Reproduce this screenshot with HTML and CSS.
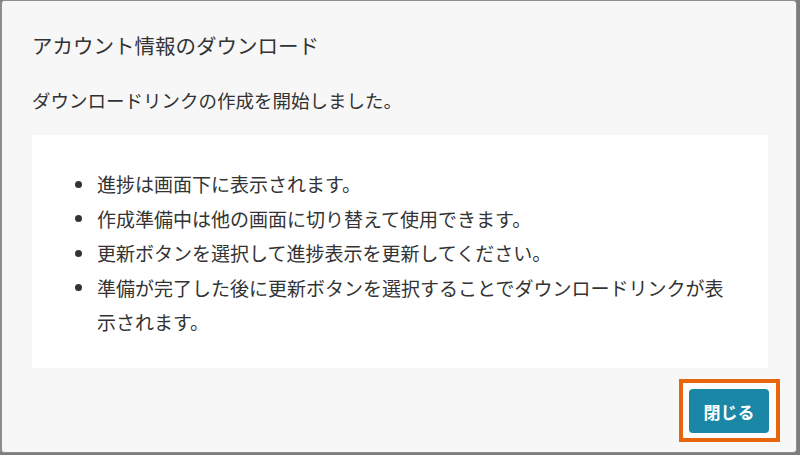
FILE: index.html
```html
<!DOCTYPE html>
<html lang="ja">
<head>
<meta charset="utf-8">
<title>アカウント情報のダウンロード</title>
<link rel="stylesheet" href="styles.css">
</head>
<body>
<div class="dialog">
  <h2 class="dialog-title">アカウント情報のダウンロード</h2>
  <p class="dialog-message">ダウンロードリンクの作成を開始しました。</p>
  <div class="notice">
    <ul class="notice-list">
      <li>進捗は画面下に表示されます。</li>
      <li>作成準備中は他の画面に切り替えて使用できます。</li>
      <li>更新ボタンを選択して進捗表示を更新してください。</li>
      <li>準備が完了した後に更新ボタンを選択することでダウンロードリンクが表示されます。</li>
    </ul>
  </div>
  <div class="dialog-footer">
    <div class="highlight">
      <button class="btn-close" type="button">閉じる</button>
    </div>
  </div>
</div>
</body>
</html>
```

FILE: styles.css
```css
* { box-sizing: border-box; }

html, body {
  margin: 0;
  padding: 0;
}

body {
  width: 800px;
  height: 455px;
  background: #7d7d7d;
  font-family: "Noto Sans CJK JP", "Noto Sans", sans-serif;
  color: #333333;
  overflow: hidden;
}

.dialog {
  width: 797px;
  display: flex;
  flex-direction: column;
  background: #f7f7f7;
  border: 1px solid #8e8e8e;
  border-left-width: 2px;
  border-radius: 4px;
  padding: 29px 28px 10px 30px;
}

.dialog-title {
  margin: 0;
  font-size: 20.5px;
  line-height: 30px;
  font-weight: normal;
  color: #333333;
}

.dialog-message {
  margin: 26px 0 0;
  font-size: 18.5px;
  line-height: 28px;
}

.notice {
  margin-top: 21px;
  background: #ffffff;
  border-radius: 3px;
  padding: 32px 40px 28px 43px;
}

.notice-list {
  margin: 0;
  padding: 0;
  list-style: none;
  font-size: 19px;
  line-height: 34.5px;
}

.notice-list li {
  display: flex;
}

.notice-list li::before {
  content: "";
  flex: none;
  width: 7px;
  height: 7px;
  border-radius: 50%;
  background: #333333;
  margin: 13.5px 15px 0 0;
}

.dialog-footer {
  display: flex;
  justify-content: flex-end;
  margin-top: 11.5px;
  margin-right: -12px;
}

.highlight {
  border: 4px solid #e8650c;
  padding: 6px 7px 5px 6px;
  background: #fdfdfd;
}

.btn-close {
  display: block;
  width: 80px;
  height: 44px;
  border: none;
  border-radius: 4px;
  background: #1a87a7;
  color: #ffffff;
  font-family: "Noto Sans CJK JP", "Noto Sans", sans-serif;
  font-size: 17px;
  font-weight: bold;
  padding: 0;
}
```
